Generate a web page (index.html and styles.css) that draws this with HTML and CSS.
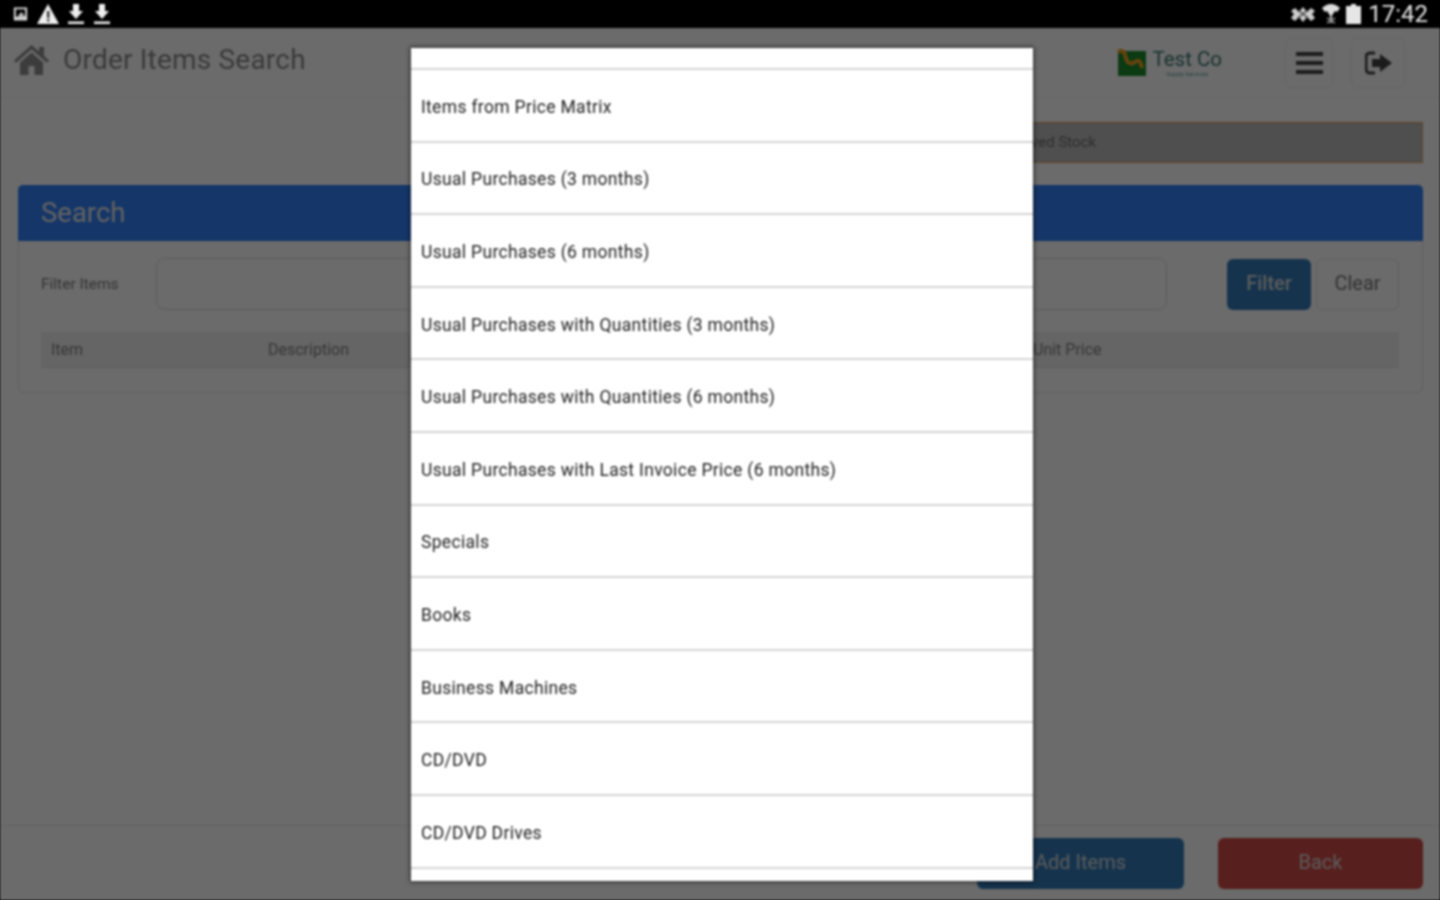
FILE: index.html
```html
<!DOCTYPE html>
<html lang="en">
<head>
<meta charset="UTF-8" />
<title>Order Items Search</title>
<link rel="stylesheet" href="styles.css">
</head>
<body>
<div class="screen">

  <div class="statusbar">
    <div class="status-icons">
      <svg width="17" height="16" viewBox="0 0 18 16"><path d="M2 1h14v14H2z M4 3v8h10V3z" fill="#ddd" fill-rule="evenodd"/><path d="M4 13h10v1H4z M7 9l3-3 4 5H6z" fill="#bbb"/></svg>
      <svg width="22" height="20" viewBox="0 0 22 20"><path d="M11 0l11 20H0z" fill="#eee"/><path d="M10 7h2.4v7H10z M10 15.200h2.400v2.300H10z" fill="#333"/></svg>
      <svg width="18" height="22" viewBox="0 0 18 22"><path d="M6 1h6v7h4l-7 8-7-8h4z M1 18.500h16V21H1z" fill="#eee"/></svg>
      <svg width="18" height="22" viewBox="0 0 18 22"><path d="M6 1h6v7h4l-7 8-7-8h4z M1 18.500h16V21H1z" fill="#eee"/></svg>
    </div>
    <div class="status-right">
      <svg width="26" height="16" viewBox="0 0 26 16"><path d="M1 5l4-3 4 4 4-5 4 5 4-4 4 3-3 3 3 4-4 3-4-4-4 5-4-5-4 4-4-3 3-4z" fill="#ccc"/><path d="M8 4l10 8M18 4L8 12" stroke="#444" stroke-width="1.500"/></svg>
      <svg width="18" height="22" viewBox="0 0 18 22"><path d="M0 5q9-8 18 0l-3 4-2-1-4 6-4-6-2 1z" fill="#ddd"/><path d="M8 12h2v8H8z" fill="#bbb"/><path d="M5 15l8 5M13 15l-8 5" stroke="#888" stroke-width="1.500"/></svg>
      <svg width="15" height="20" viewBox="0 0 15 20"><path d="M5 0h5v2h5v18H0V2h5z" fill="#e6e6e6"/></svg>
      <span class="clock">17:42</span>
    </div>
  </div>

  <div class="app">
    <header class="topbar">
      <svg class="home-icon" width="35" height="30" viewBox="0 0 35 30"><path d="M17.500 0l7.500 6.600V2h5v9l5 4.500-2 2.300L17.500 4.300 2 17.800 0 15.500z M6 17.500L17.500 7.500 29 17.500V30H20.500V21h-6v9H6z" fill="#8f8f8f"/></svg>
      <h1 class="page-title">Order Items Search</h1>
      <div class="brand">
        <svg width="30" height="27" viewBox="0 0 30 27"><path d="M1 2h28v25H1z" fill="#1c8a2e"/><path d="M1 3c5-3 7 1 8 6s5 7 9 4 6 0 7 6" fill="none" stroke="#f0a020" stroke-width="4"/></svg>
        <div class="brand-text">
          <span class="brand-name">Test Co</span>
          <span class="brand-tag">Supply Services</span>
        </div>
      </div>
      <button class="icon-btn menu-btn">
        <svg width="27" height="24" viewBox="0 0 27 24"><path d="M0 1h27v4H0z M0 10h27v4H0z M0 19h27v4H0z" fill="#444"/></svg>
      </button>
      <button class="icon-btn logout-btn">
        <svg width="27" height="24" viewBox="0 0 27 24"><path d="M10 2H5a4 4 0 0 0-4 4v12a4 4 0 0 0 4 4h5" fill="none" stroke="#444" stroke-width="3"/><path d="M15 3l12 9-12 9v-5H7V8h8z" fill="#444"/></svg>
      </button>
    </header>

    <main class="content">
      <div class="alert-bar">Reserved Stock</div>

      <section class="panel">
        <div class="panel-head">Search</div>
        <div class="panel-body">
          <div class="filter-row">
            <label class="filter-label">Filter Items</label>
            <div class="filter-input"></div>
            <button class="btn-filter">Filter</button>
            <button class="btn-clear">Clear</button>
          </div>
          <div class="table-head">
            <span class="col-item">Item</span>
            <span class="col-desc">Description</span>
            <span class="col-price">Unit Price</span>
          </div>
        </div>
      </section>
    </main>

    <footer class="footer">
      <button class="btn-add">Add Items</button>
      <button class="btn-back">Back</button>
    </footer>

    <div class="scrim"></div>

    <div class="dialog">
      <div class="option option-cut"></div>
      <div class="option">Items from Price Matrix</div>
      <div class="option">Usual Purchases (3 months)</div>
      <div class="option">Usual Purchases (6 months)</div>
      <div class="option">Usual Purchases with Quantities (3 months)</div>
      <div class="option">Usual Purchases with Quantities (6 months)</div>
      <div class="option">Usual Purchases with Last Invoice Price (6 months)</div>
      <div class="option">Specials</div>
      <div class="option">Books</div>
      <div class="option">Business Machines</div>
      <div class="option">CD/DVD</div>
      <div class="option">CD/DVD Drives</div>
    </div>
  </div>

</div>
</body>
</html>
```

FILE: styles.css
```css
* {
  box-sizing: border-box;
}
html, body {
  margin: 0;
  padding: 0;
  height: 100%;
  overflow: hidden;
}
body {
  font-family: Roboto, "Liberation Sans", sans-serif;
  background: #000;
}
button {
  font-family: inherit;
  padding: 0;
}
.screen {
  width: 1440px;
  height: 900px;
  display: flex;
  flex-direction: column;
  filter: blur(0.8px);
}

/* android status bar */
.statusbar {
  height: 28px;
  flex: none;
  background: #000;
  display: flex;
  justify-content: space-between;
  align-items: center;
  padding: 0 12px;
}
.status-icons, .status-right {
  display: flex;
  align-items: center;
}
.status-icons {
  gap: 8px;
}
.status-right {
  gap: 6px;
}
.clock {
  color: #e4e4e4;
  font-size: 24px;
  margin-left: 1px;
}

.app {
  flex: 1;
  position: relative;
  display: flex;
  flex-direction: column;
  background: #fff;
  overflow: hidden;
}

/* header */
.topbar {
  height: 70px;
  flex: none;
  display: flex;
  align-items: center;
  padding: 0 35px 0 14px;
  border-bottom: 1px solid #f2f2f2;
}
.home-icon {
  flex: none;
  margin-top: -5px;
}
.page-title {
  margin: -6px 0 0 14px;
  font-size: 28px;
  font-weight: 400;
  color: #8a8a8a;
  letter-spacing: 0.2px;
}
.brand {
  margin-left: auto;
  display: flex;
  align-items: center;
  gap: 5px;
}
.brand-text {
  display: flex;
  flex-direction: column;
  align-items: center;
}
.brand-name {
  font-size: 20.5px;
  line-height: 22px;
  color: #35786f;
}
.brand-tag {
  font-size: 6px;
  line-height: 7px;
  color: #5a9d95;
}
.icon-btn {
  height: 50px;
  display: flex;
  align-items: center;
  justify-content: center;
  background: #fff;
  border: 1px solid #eeeeee;
  border-radius: 6px;
}
.menu-btn {
  width: 48px;
  margin-left: 63px;
}
.logout-btn {
  width: 54px;
  margin-left: 18px;
}

/* main area */
.content {
  flex: 1;
  padding: 24px 17px 0 18px;
}
.alert-bar {
  height: 41px;
  width: 800px;
  margin-left: auto;
  background: #bdbdbd;
  border: 1px solid #e0a860;
  padding-left: 369px;
  font-size: 15px;
  line-height: 38px;
  color: #6e6e6e;
}
.panel {
  margin-top: 22px;
  height: 208px;
  border: 1px solid #e6e6e6;
  border-radius: 5px;
}
.panel-head {
  height: 56px;
  margin: -1px -1px 0;
  padding-left: 23px;
  background: #3481f8;
  border-radius: 5px 5px 0 0;
  color: #ececec;
  font-size: 27.5px;
  line-height: 56px;
}
.panel-body {
  padding: 17px 23px 0 22px;
}
.filter-row {
  display: flex;
  align-items: center;
  height: 52px;
}
.filter-label {
  width: 115px;
  flex: none;
  font-size: 15.5px;
  color: #7c7c7c;
}
.filter-input {
  flex: 1;
  height: 52px;
  border: 1px solid #dedede;
  border-radius: 8px;
}
.btn-filter, .btn-clear {
  height: 51px;
  border-radius: 6px;
  font-size: 20px;
  padding-bottom: 2px;
}
.btn-filter {
  width: 84px;
  margin-left: 60px;
  background: #337ab7;
  border: none;
  color: #dcdcdc;
  font-weight: 500;
}
.btn-clear {
  width: 83px;
  margin-left: 5px;
  background: #fff;
  border: 1px solid #e2e2e2;
  color: #777;
}
.table-head {
  margin-top: 22px;
  height: 36px;
  background: #f0f0f0;
  border-bottom: 1px solid #e2e2e2;
  display: flex;
  align-items: center;
  font-size: 16px;
  color: #828282;
}
.col-item {
  width: 227px;
  padding-left: 10px;
}
.col-desc {
  width: 765px;
}

/* footer */
.footer {
  flex: none;
  height: 75px;
  border-top: 1px solid #e8e8e8;
  display: flex;
  justify-content: flex-end;
  gap: 34px;
  padding: 12px 17px 0 0;
}
.btn-add, .btn-back {
  height: 51px;
  border: none;
  border-radius: 6px;
  font-size: 20px;
  color: #dcdcdc;
  padding-bottom: 4px;
}
.btn-add {
  width: 207px;
  background: #337ab7;
}
.btn-back {
  width: 205px;
  background: #d04a45;
}

/* popup list */
.scrim {
  position: absolute;
  inset: 0;
  background: rgba(0, 0, 0, 0.58);
}
.dialog {
  position: absolute;
  top: 20px;
  left: 411px;
  width: 622px;
  height: 833px;
  background: #fff;
  overflow: hidden;
  box-shadow: 0 0 4px 1px rgba(0, 0, 0, 0.6);
}
.option {
  height: 72.6px;
  display: flex;
  align-items: center;
  padding: 3px 0 0 10px;
  border-bottom: 2px solid #d4d4d4;
  font-size: 17.5px;
  letter-spacing: 0.32px;
  color: #222;
}
.option-cut {
  height: 22px;
}
```
